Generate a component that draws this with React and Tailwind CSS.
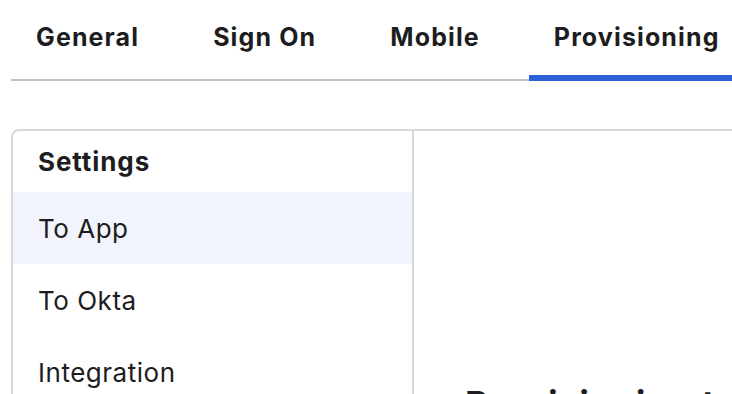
import React from 'react';

const tabs = ['General', 'Sign On', 'Mobile', 'Provisioning'];
const menu = ['To App', 'To Okta', 'Integration'];

const App = () => {
  return (
    <div className="w-[732px] h-[394px] overflow-hidden bg-white text-[#1d1d21] font-['Inter','Liberation_Sans',sans-serif]">
      <div className="ml-[11px] w-[900px]">
        {/* tabs */}
        <nav className="flex gap-6 h-[81px] border-b-2 border-[#c1c1c8]">
          {tabs.map((t) => (
            <div
              key={t}
              className={
                t === 'Provisioning'
                  ? 'px-[25px] flex items-center text-[25px] font-bold tracking-[0.045em] border-b-[6px] border-[#2f62d6] -mb-[2px]'
                  : 'px-[25px] flex items-center pb-[4px] text-[25px] font-bold tracking-[0.045em]'
              }
            >
              {t}
            </div>
          ))}
        </nav>

        {/* panel */}
        <div className="mt-[48px] flex border-2 border-[#d7d7dc] rounded-lg h-[400px]">
          <aside className="w-[401px] shrink-0 border-r-2 border-[#d7d7dc]">
            <div className="h-[61px] flex items-center pl-[25px] text-[26px] font-bold tracking-[0.035em]">Settings</div>
            {menu.map((m) => (
              <div
                key={m}
                className={
                  m === 'To App'
                    ? 'h-[72px] flex items-center pl-[25px] text-[26px] tracking-[0.02em] bg-[#f1f4fd]'
                    : 'h-[72px] flex items-center pl-[25px] text-[26px] tracking-[0.02em]'
                }
              >
                {m}
              </div>
            ))}
          </aside>
          <section className="flex-1 pl-[51px] pt-[251px]">
            <h2 className="text-[36px] leading-[44px] font-bold tracking-[0.02em]">Provisioning to App</h2>
          </section>
        </div>
      </div>
    </div>
  );
};

export default App;
